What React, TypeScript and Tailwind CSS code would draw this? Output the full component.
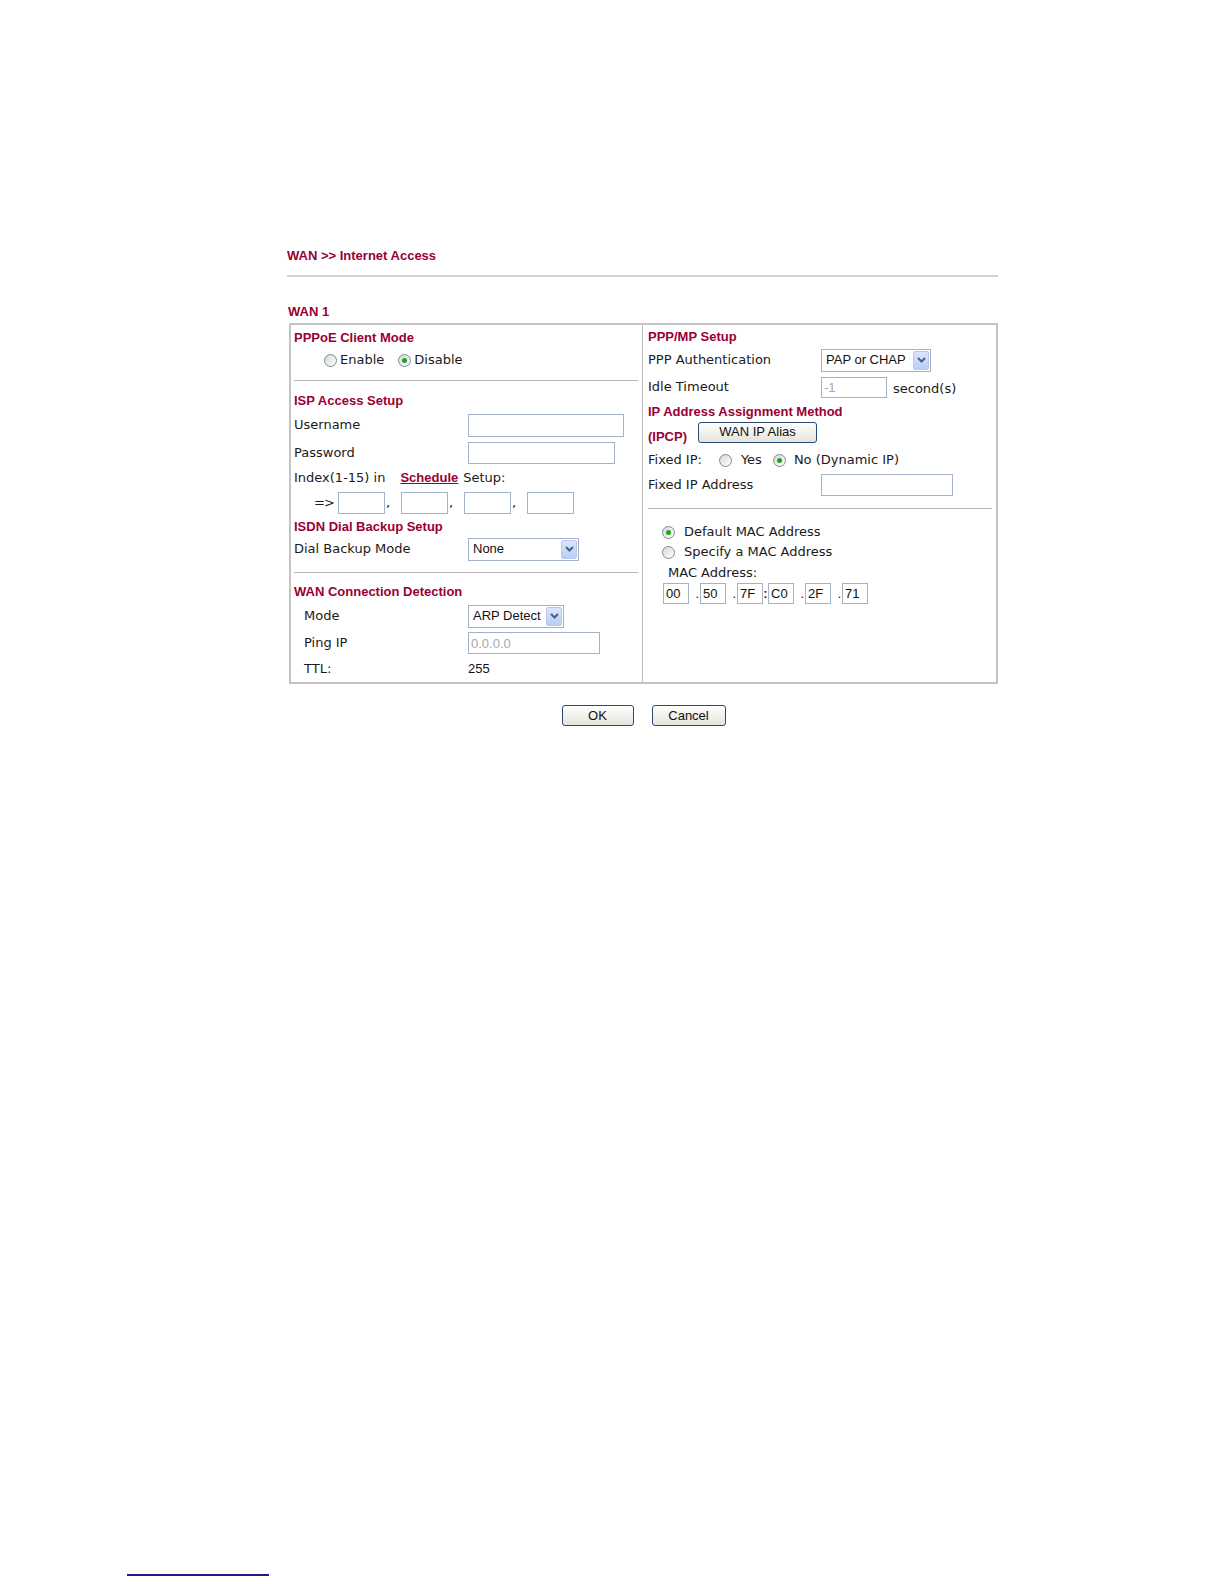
import React from "react";

const label = "font-['DejaVu_Sans',Verdana,sans-serif] text-[13px] text-[#1a1a1a]";
const head = "font-['Liberation_Sans',Arial,sans-serif] font-bold text-[13px] text-[#990033]";
const arial = "font-['Liberation_Sans',Arial,sans-serif] text-[13px]";

function Radio({ checked, className = "" }: { checked?: boolean; className?: string }) {
  return (
    <span
      className={`flex w-[13px] h-[13px] shrink-0 items-center justify-center rounded-full border border-[#7d8c9c] bg-linear-to-br from-[#d8d8d2] to-white ${className}`}
    >
      {checked && <span className="w-[5px] h-[5px] rounded-full bg-[#22a022]" />}
    </span>
  );
}

function TextBox({ w, h = 23, value, gray }: { w: number; h?: number; value?: string; gray?: boolean }) {
  return (
    <div
      className={`${arial} flex shrink-0 items-center border border-[#a3b2c6] bg-white pl-[2px] leading-none ${gray ? "text-[#a8a8a8]" : "text-[#111]"}`}
      style={{ width: w, height: h }}
    >
      {value}
    </div>
  );
}

function Select({ w, value }: { w: number; value: string }) {
  return (
    <div
      className={`${arial} flex h-[23px] shrink-0 items-center justify-between border border-[#a3b2c6] bg-white pl-[4px] pr-[1px] text-[#111]`}
      style={{ width: w }}
    >
      <span>{value}</span>
      <span className="flex h-[19px] w-[16px] items-center justify-center rounded-[2px] border border-[#b8c8ee] bg-linear-to-b from-[#dbe5fd] to-[#b9cdf8]">
        <svg width="9" height="6" viewBox="0 0 9 6">
          <path d="M1 1l3.5 3.5L8 1" fill="none" stroke="#4d6185" strokeWidth="2" />
        </svg>
      </span>
    </div>
  );
}

function Button({ children, w, className = "" }: { children: React.ReactNode; w: number; className?: string }) {
  return (
    <div
      className={`${arial} flex h-[21px] shrink-0 items-center justify-center rounded-[3px] border border-[#2a4a78] bg-linear-to-b from-white to-[#e4e3dc] text-[#111] ${className}`}
      style={{ width: w }}
    >
      {children}
    </div>
  );
}

function Row({ h, children, className = "" }: { h: number; children: React.ReactNode; className?: string }) {
  return (
    <div className={`flex items-center ${className}`} style={{ height: h }}>
      {children}
    </div>
  );
}

function LeftColumn() {
  return (
    <div className="flex w-[351px] flex-col pl-[3px] pr-[4px]">
      <Row h={25}><span className={head}>PPPoE Client Mode</span></Row>
      <Row h={20} className="pl-[30px]">
        <Radio />
        <span className={`${label} ml-[3px]`}>Enable</span>
        <Radio checked className="ml-[14px]" />
        <span className={`${label} ml-[3px]`}>Disable</span>
      </Row>
      <div className="mt-[10px] h-px bg-[#b4b4b4]" />
      <Row h={21} className="mt-[9px]"><span className={head}>ISP Access Setup</span></Row>
      <Row h={28}>
        <span className={`${label} w-[174px] shrink-0`}>Username</span>
        <TextBox w={156} />
      </Row>
      <Row h={28}>
        <span className={`${label} w-[174px] shrink-0`}>Password</span>
        <TextBox w={147} h={22} />
      </Row>
      <Row h={22}>
        <span className={label}>Index(1-15) in</span>
        <span className={`${head} ml-[15px] underline`}>Schedule</span>
        <span className={`${label} ml-[5px]`}>Setup:</span>
      </Row>
      <Row h={28} className="pl-[20px]">
        <span className={`${label} w-[24px] tracking-[-1px]`}>=&gt;</span>
        <TextBox w={47} h={22} />
        <span className={`${label} w-[16px] pl-[1px]`}>,</span>
        <TextBox w={47} h={22} />
        <span className={`${label} w-[16px] pl-[1px]`}>,</span>
        <TextBox w={47} h={22} />
        <span className={`${label} w-[16px] pl-[1px]`}>,</span>
        <TextBox w={47} h={22} />
      </Row>
      <Row h={20}><span className={head}>ISDN Dial Backup Setup</span></Row>
      <Row h={24}>
        <span className={`${label} w-[174px] shrink-0`}>Dial Backup Mode</span>
        <Select w={111} value="None" />
      </Row>
      <div className="mt-[11px] h-px bg-[#b4b4b4]" />
      <Row h={20} className="mt-[9px]"><span className={head}>WAN Connection Detection</span></Row>
      <Row h={28}>
        <span className={`${label} w-[174px] shrink-0 pl-[10px]`}>Mode</span>
        <Select w={96} value="ARP Detect" />
      </Row>
      <Row h={26}>
        <span className={`${label} w-[174px] shrink-0 pl-[10px]`}>Ping IP</span>
        <TextBox w={132} h={22} value="0.0.0.0" gray />
      </Row>
      <Row h={26}>
        <span className={`${label} w-[174px] shrink-0 pl-[10px]`}>TTL:</span>
        <span className={`${arial} text-[#111]`}>255</span>
      </Row>
    </div>
  );
}

function MacSep({ c }: { c: string }) {
  return (
    <span
      className={`${arial} flex ${c === ":" ? "w-[5px] justify-center font-bold text-[#990033]" : "w-[11px] justify-end pr-[1px] text-[#111]"}`}
    >
      {c}
    </span>
  );
}

function RightColumn() {
  const mac = ["00", "50", "7F", "C0", "2F", "71"];
  const seps = [".", ".", ":", ".", "."];
  return (
    <div className="flex flex-1 flex-col pl-[5px] pr-[4px]">
      <Row h={23}><span className={head}>PPP/MP Setup</span></Row>
      <Row h={24}>
        <span className={`${label} w-[173px] shrink-0`}>PPP Authentication</span>
        <Select w={110} value="PAP or CHAP" />
      </Row>
      <Row h={30}>
        <span className={`${label} w-[173px] shrink-0`}>Idle Timeout</span>
        <TextBox w={66} h={21} value="-1" gray />
        <span className={`${label} ml-[6px] mt-[4px]`}>second(s)</span>
      </Row>
      <Row h={20}><span className={head}>IP Address Assignment Method</span></Row>
      <Row h={24}>
        <span className={`${head} mt-[6px]`}>(IPCP)</span>
        <Button w={119} className="ml-[11px] -mt-[4px]">WAN IP Alias</Button>
      </Row>
      <Row h={28}>
        <span className={label}>Fixed IP:</span>
        <Radio className="ml-[17px]" />
        <span className={`${label} ml-[9px]`}>Yes</span>
        <Radio checked className="ml-[11px]" />
        <span className={`${label} ml-[8px]`}>No (Dynamic IP)</span>
      </Row>
      <Row h={22}>
        <span className={`${label} w-[173px] shrink-0`}>Fixed IP Address</span>
        <TextBox w={132} h={22} />
      </Row>
      <div className="mt-[12px] h-px bg-[#b4b4b4]" />
      <Row h={20} className="mt-[13px] pl-[14px]">
        <Radio checked />
        <span className={`${label} ml-[9px]`}>Default MAC Address</span>
      </Row>
      <Row h={20} className="pl-[14px]">
        <Radio />
        <span className={`${label} ml-[9px]`}>Specify a MAC Address</span>
      </Row>
      <Row h={21} className="pl-[20px]">
        <span className={label}>MAC Address:</span>
      </Row>
      <div className="flex items-center pl-[15px]">
        {mac.map((m, i) => (
          <React.Fragment key={m + i}>
            <TextBox w={26} h={21} value={m} />
            {i < seps.length && <MacSep c={seps[i]} />}
          </React.Fragment>
        ))}
      </div>
    </div>
  );
}

export default function App() {
  return (
    <div className="flex min-h-[1584px] flex-col bg-white">
      <div className="ml-[287px] mt-[246px] flex w-[711px] flex-col">
        <Row h={20}><span className={head}>WAN &gt;&gt; Internet Access</span></Row>
        <div className="mt-[9px] h-[2px] bg-[#d2d2d2]" />
        <Row h={18} className="mt-[26px] pl-[1px]"><span className={head}>WAN 1</span></Row>
        <div className="mt-[2px] ml-[2px] flex w-[709px] border-2 border-[#c4c4c4]">
          <LeftColumn />
          <div className="w-px bg-[#bdbdbd]" />
          <RightColumn />
        </div>
        <div className="mt-[21px] flex justify-center gap-[18px] pl-[2px]">
          <Button w={72}>OK</Button>
          <Button w={74}>Cancel</Button>
        </div>
      </div>
      <div className="mt-auto mb-[8px] ml-[127px] h-[2px] w-[142px] bg-[#1c1c82]" />
    </div>
  );
}
